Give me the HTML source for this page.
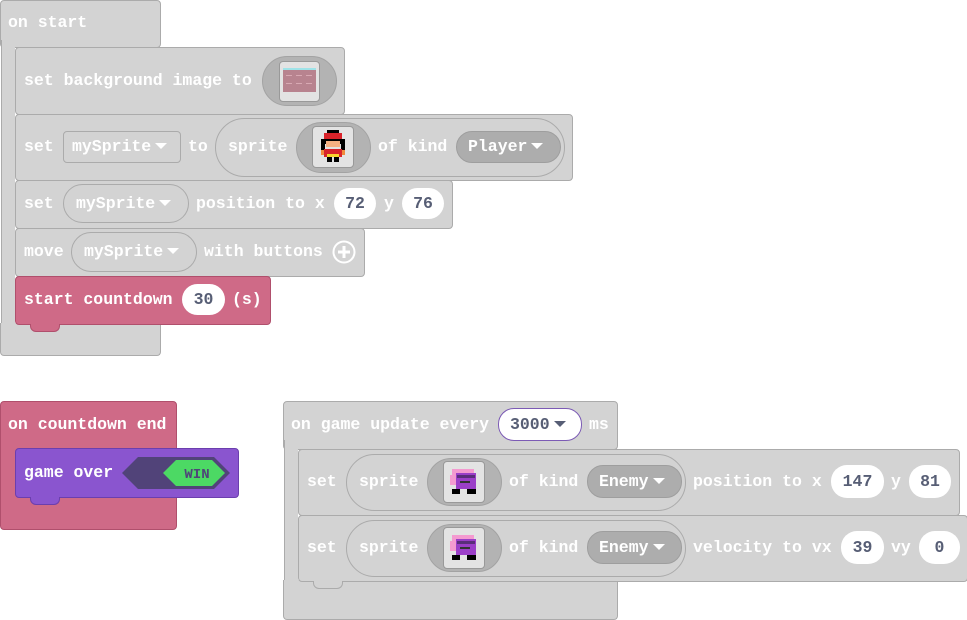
<!DOCTYPE html>
<html><head><meta charset="utf-8"><style>
body{margin:0;width:967px;height:613px;background:#fff;position:relative;overflow:hidden;font-family:"Liberation Mono",monospace;font-weight:bold;font-size:16.5px}
div,span{position:absolute;box-sizing:border-box}
.g{background:#d3d3d3;border:1px solid #ababab;border-radius:4px}
.p{background:#cf6a87;border:1px solid #b04f6c;border-radius:4px}
.v{background:#8a55cf;border:1px solid #6b3fae;border-radius:4px}
.t{color:#fff;line-height:22px;white-space:nowrap}
.n{background:#fff;border-radius:16px;color:#575e75;text-align:center;line-height:31px}
.o{border:1px solid #ababab;border-radius:30px}
.io{background:#b3b3b3;border:1px solid #a3a3a3;border-radius:26px}
.img{background:#e3e3e3;border:1px solid #999;border-radius:4px}
.dp{background:#adadad;border:1px solid #9e9e9e;border-radius:16px}
.tab{width:30px;height:8px;border-radius:0 0 6px 6px;border:1px solid;border-top:none}
i{display:inline-block;width:0;height:0;border-left:6px solid transparent;border-right:6px solid transparent;border-top:6px solid #fff;vertical-align:middle;margin-left:4px;position:relative;top:-1px}
i.d{border-top-color:#575e75}
</style></head><body>

<div class="g" style="left:0;top:0;width:161px;height:48px"></div>
<div style="left:1px;top:40px;width:14px;height:290px;background:#d3d3d3;border-left:1px solid #ababab"></div>
<div class="g" style="left:0;top:323px;width:161px;height:33px;border-top:none;border-radius:0 0 4px 4px"></div>
<span class="t" style="left:8px;top:12px">on start</span>

<div class="g" style="left:15px;top:47px;width:330px;height:68px"></div>
<span class="t" style="left:24px;top:70px">set background image to</span>
<div class="io" style="left:262px;top:56px;width:75px;height:50px"></div>
<div class="img" style="left:279px;top:61px;width:41px;height:41px"></div>
<svg style="position:absolute;left:283px;top:66px" width="33" height="30"><rect x="0" y="2" width="33" height="2" fill="#9fe3e8"/><rect x="0" y="4" width="33" height="22" fill="#b8838f"/><g fill="#d8a9b3"><rect x="3" y="9" width="6" height="1"/><rect x="13" y="9" width="6" height="1"/><rect x="23" y="9" width="6" height="1"/><rect x="3" y="17" width="6" height="1"/><rect x="13" y="17" width="6" height="1"/><rect x="23" y="17" width="6" height="1"/></g></svg>

<div class="g" style="left:15px;top:114px;width:558px;height:67px"></div>
<span class="t" style="left:24px;top:136px">set</span>
<div style="left:63px;top:131px;width:118px;height:32px;border:1px solid #ababab;border-radius:4px"></div>
<span class="t" style="left:72px;top:136px">mySprite<i></i></span>
<span class="t" style="left:188px;top:136px">to</span>
<div class="o" style="left:215px;top:118px;width:350px;height:59px"></div>
<span class="t" style="left:228px;top:136px">sprite</span>
<div class="io" style="left:296px;top:122px;width:75px;height:51px"></div>
<div class="img" style="left:312px;top:126px;width:42px;height:42px"></div>
<svg style="position:absolute;left:318px;top:130px" width="30" height="34"><rect x="9" y="0" width="12" height="3" fill="#000"/><rect x="6" y="3" width="18" height="6" fill="#d8232a"/><rect x="3" y="9" width="24" height="5" fill="#000"/><rect x="8" y="11" width="14" height="6" fill="#f4b183"/><rect x="3" y="14" width="4" height="6" fill="#000"/><rect x="23" y="14" width="4" height="6" fill="#000"/><rect x="6" y="19" width="18" height="8" fill="#d8232a"/><rect x="3" y="20" width="3" height="5" fill="#f08a3c"/><rect x="24" y="20" width="3" height="5" fill="#f08a3c"/><rect x="9" y="24" width="12" height="3" fill="#f6d32d"/><rect x="9" y="27" width="5" height="5" fill="#000"/><rect x="16" y="27" width="5" height="5" fill="#000"/></svg>
<span class="t" style="left:378px;top:136px">of kind</span>
<div class="dp" style="left:456px;top:131px;width:105px;height:32px"></div>
<span class="t" style="left:468px;top:136px">Player<i></i></span>

<div class="g" style="left:15px;top:180px;width:438px;height:49px"></div>
<span class="t" style="left:24px;top:193px">set</span>
<div class="o" style="left:63px;top:184px;width:126px;height:39px"></div>
<span class="t" style="left:76px;top:193px">mySprite<i></i></span>
<span class="t" style="left:196px;top:193px">position to x</span>
<div class="n" style="left:334px;top:188px;width:42px;height:31px">72</div>
<span class="t" style="left:384px;top:193px">y</span>
<div class="n" style="left:402px;top:188px;width:42px;height:31px">76</div>

<div class="g" style="left:15px;top:228px;width:350px;height:49px"></div>
<span class="t" style="left:24px;top:241px">move</span>
<div class="o" style="left:71px;top:232px;width:126px;height:40px"></div>
<span class="t" style="left:84px;top:241px">mySprite<i></i></span>
<span class="t" style="left:204px;top:241px">with buttons</span>
<svg style="position:absolute;left:332px;top:240px" width="24" height="24"><circle cx="12" cy="12" r="10.5" fill="none" stroke="#fff" stroke-width="2"/><path d="M12 6v12M6 12h12" stroke="#fff" stroke-width="3"/></svg>

<div class="p" style="left:15px;top:276px;width:256px;height:49px"></div>
<div class="tab" style="left:30px;top:324px;background:#cf6a87;border-color:#b04f6c"></div>
<span class="t" style="left:24px;top:289px">start countdown</span>
<div class="n" style="left:182px;top:284px;width:43px;height:31px">30</div>
<span class="t" style="left:232px;top:289px">(s)</span>

<div class="p" style="left:0;top:401px;width:177px;height:129px"></div>
<span class="t" style="left:8px;top:414px">on countdown end</span>
<div class="v" style="left:15px;top:448px;width:224px;height:50px"></div>
<div class="tab" style="left:30px;top:497px;background:#8a55cf;border-color:#6b3fae"></div>
<span class="t" style="left:24px;top:462px">game over</span>
<svg style="position:absolute;left:121px;top:456px" width="110" height="34"><polygon points="1,17 17,1 93,1 109,17 93,33 17,33" fill="#514379"/><polygon points="42,17 55,4 91,4 104,17 91,30 55,30" fill="#4cd964"/><text x="76" y="22" font-family="Liberation Mono" font-weight="bold" font-size="14" fill="#4f4579" text-anchor="middle">WIN</text></svg>

<div class="g" style="left:283px;top:401px;width:335px;height:49px"></div>
<div style="left:284px;top:440px;width:14px;height:150px;background:#d3d3d3;border-left:1px solid #ababab"></div>
<div class="g" style="left:283px;top:580px;width:335px;height:40px;border-top:none;border-radius:0 0 4px 4px"></div>
<span class="t" style="left:291px;top:414px">on game update every</span>
<div class="n" style="left:498px;top:408px;width:84px;height:33px;border:1px solid #7c5bb5;text-align:left;padding-left:11px">3000<i class="d"></i></div>
<span class="t" style="left:589px;top:414px">ms</span>

<div class="g" style="left:298px;top:449px;width:662px;height:67px"></div>
<span class="t" style="left:307px;top:471px">set</span>
<div class="o" style="left:346px;top:454px;width:340px;height:57px"></div>
<span class="t" style="left:359px;top:471px">sprite</span>
<div class="io" style="left:427px;top:458px;width:75px;height:48px"></div>
<div class="img" style="left:443px;top:461px;width:42px;height:42px"></div>
<svg style="position:absolute;left:448px;top:467px" width="32" height="30"><rect x="4" y="2" width="22" height="10" fill="#f49ad0"/><rect x="2" y="8" width="6" height="10" fill="#f49ad0"/><rect x="8" y="6" width="20" height="16" fill="#9b3fc8"/><rect x="9" y="8" width="18" height="3" fill="#5a2e7a"/><rect x="12" y="14" width="10" height="2" fill="#333"/><rect x="4" y="22" width="8" height="5" fill="#000"/><rect x="19" y="22" width="9" height="5" fill="#000"/></svg>
<span class="t" style="left:509px;top:471px">of kind</span>
<div class="dp" style="left:587px;top:465px;width:95px;height:33px"></div>
<span class="t" style="left:599px;top:471px">Enemy<i></i></span>
<span class="t" style="left:693px;top:471px">position to x</span>
<div class="n" style="left:831px;top:465px;width:53px;height:33px;line-height:33px">147</div>
<span class="t" style="left:891px;top:471px">y</span>
<div class="n" style="left:909px;top:465px;width:42px;height:33px;line-height:33px">81</div>

<div class="g" style="left:298px;top:515px;width:670px;height:67px"></div>
<div class="tab" style="left:313px;top:581px;background:#d3d3d3;border-color:#ababab"></div>
<span class="t" style="left:307px;top:537px">set</span>
<div class="o" style="left:346px;top:520px;width:340px;height:57px"></div>
<span class="t" style="left:359px;top:537px">sprite</span>
<div class="io" style="left:427px;top:524px;width:75px;height:48px"></div>
<div class="img" style="left:443px;top:527px;width:42px;height:42px"></div>
<svg style="position:absolute;left:448px;top:533px" width="32" height="30"><rect x="4" y="2" width="22" height="10" fill="#f49ad0"/><rect x="2" y="8" width="6" height="10" fill="#f49ad0"/><rect x="8" y="6" width="20" height="16" fill="#9b3fc8"/><rect x="9" y="8" width="18" height="3" fill="#5a2e7a"/><rect x="12" y="14" width="10" height="2" fill="#333"/><rect x="4" y="22" width="8" height="5" fill="#000"/><rect x="19" y="22" width="9" height="5" fill="#000"/></svg>
<span class="t" style="left:509px;top:537px">of kind</span>
<div class="dp" style="left:587px;top:531px;width:95px;height:33px"></div>
<span class="t" style="left:599px;top:537px">Enemy<i></i></span>
<span class="t" style="left:693px;top:537px">velocity to vx</span>
<div class="n" style="left:841px;top:531px;width:43px;height:33px;line-height:33px">39</div>
<span class="t" style="left:891px;top:537px">vy</span>
<div class="n" style="left:919px;top:531px;width:41px;height:33px;line-height:33px">0</div>

</body></html>
